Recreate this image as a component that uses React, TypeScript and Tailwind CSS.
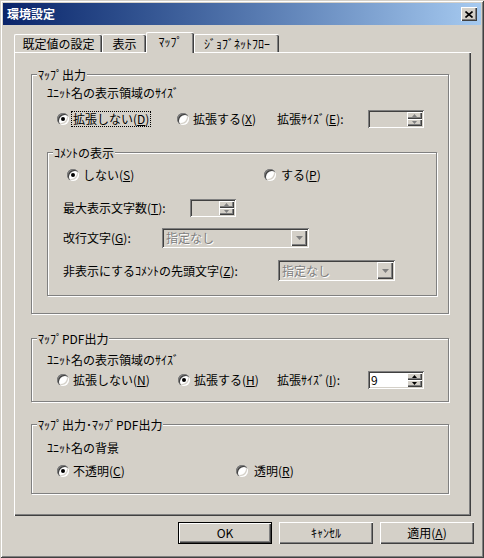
import type { ReactNode } from 'react'

const FONT = "font-['Noto_Sans_CJK_JP','Noto_Sans',sans-serif]"
const SUNKEN =
  'shadow-[inset_1px_1px_0_#808080,inset_-1px_-1px_0_#fff,inset_2px_2px_0_#404040,inset_-2px_-2px_0_#d4d0c8]'
const RAISED =
  'shadow-[inset_1px_1px_0_#fff,inset_-1px_-1px_0_#404040,inset_-2px_-2px_0_#808080]'

function Radio({ checked }: { checked?: boolean }) {
  return (
    <span className="relative inline-block h-[12px] w-[12px] shrink-0 rounded-full bg-white shadow-[inset_1px_1px_0_#808080,inset_2px_2px_0_#404040,inset_-1px_-1px_0_#fff,inset_-2px_-2px_0_#d4d0c8]">
      {checked && <span className="absolute left-[4px] top-[4px] h-[4px] w-[4px] rounded-full bg-black" />}
    </span>
  )
}

function Group({ label, className, children }: { label: string; className: string; children?: ReactNode }) {
  return (
    <div className={`relative flex flex-col border border-[#808080] shadow-[inset_1px_1px_0_#fff,1px_1px_0_#fff] ${className}`}>
      <span className="absolute -top-[7px] left-[5px] bg-[#d4d0c8] px-[1px] leading-[13px]">{label}</span>
      {children}
    </div>
  )
}

function Arrow({ up, enabled }: { up?: boolean; enabled?: boolean }) {
  const c = enabled ? '#000' : '#808080'
  return (
    <svg width="5" height="3" viewBox="0 0 5 3">
      <path d={up ? 'M2.5 0 L5 3 L0 3 Z' : 'M0 0 L5 0 L2.5 3 Z'} fill={c} />
    </svg>
  )
}

function Spin({ className, value, enabled }: { className: string; value?: string; enabled?: boolean }) {
  return (
    <div className={`flex h-[18px] p-[2px] ${enabled ? 'bg-white' : 'bg-[#d4d0c8]'} ${SUNKEN} ${className}`}>
      <div className="flex flex-1 items-center pl-[1px] leading-none">{value}</div>
      <div className="flex w-[15px] flex-col">
        <div className={`flex h-[7px] items-center justify-center bg-[#d4d0c8] ${RAISED}`}>
          <Arrow up enabled={enabled} />
        </div>
        <div className={`flex h-[7px] items-center justify-center bg-[#d4d0c8] ${RAISED}`}>
          <Arrow enabled={enabled} />
        </div>
      </div>
    </div>
  )
}

function Combo({ className }: { className: string }) {
  return (
    <div className={`flex p-[2px] bg-[#d4d0c8] ${SUNKEN} ${className}`}>
      <div className="flex flex-1 items-center pl-[2px] text-[#808080] [text-shadow:1px_1px_0_#fff]">指定なし</div>
      <div className={`flex w-[16px] items-center justify-center bg-[#d4d0c8] ${RAISED}`}>
        <svg width="7" height="4" viewBox="0 0 7 4">
          <path d="M0 0 L7 0 L3.5 4 Z" fill="#808080" />
        </svg>
      </div>
    </div>
  )
}

function Tab({ label, className, selected }: { label: string; className: string; selected?: boolean }) {
  return (
    <div
      className={`flex items-center justify-center rounded-t-[2px] border-l border-t border-white bg-[#d4d0c8] shadow-[inset_-1px_0_0_#404040,inset_-2px_0_0_#808080] ${
        selected ? 'relative z-10 -mb-[1px] h-[21px] pb-[2px]' : 'h-[18px]'
      } ${className}`}
    >
      {label}
    </div>
  )
}

function Button({ children, def }: { children: ReactNode; def?: boolean }) {
  return (
    <div
      className={`flex h-[22px] w-[94px] items-center justify-center bg-[#d4d0c8] ${
        def
          ? 'border border-black shadow-[inset_1px_1px_0_#fff,inset_-1px_-1px_0_#404040,inset_-2px_-2px_0_#808080]'
          : RAISED
      }`}
    >
      {children}
    </div>
  )
}

export default function App() {
  return (
    <div
      className={`flex h-[558px] w-[484px] flex-col bg-[#d4d0c8] p-[3px] text-[12px] leading-none text-black shadow-[inset_1px_1px_0_#d4d0c8,inset_-1px_-1px_0_#404040,inset_2px_2px_0_#fff,inset_-2px_-2px_0_#808080] ${FONT}`}
    >
      {/* title bar */}
      <div className="flex h-[22px] items-center justify-between bg-gradient-to-r from-[#0a246a] to-[#a6caf0] pl-[4px] pr-[4px]">
        <span className="font-bold text-white">環境設定</span>
        <div className={`flex h-[14px] w-[16px] items-center justify-center bg-[#d4d0c8] ${RAISED}`}>
          <svg width="8" height="7" viewBox="0 0 8 7">
            <path d="M0.5 0.5 L7.5 6.5 M7.5 0.5 L0.5 6.5" stroke="#000" strokeWidth="1.6" />
          </svg>
        </div>
      </div>

      {/* tabs */}
      <div className="ml-[11px] mt-[7px] flex h-[20px] items-end">
        <Tab label="既定値の設定" className="w-[88px]" />
        <Tab label="表示" className="w-[44px]" />
        <Tab label="ﾏｯﾌﾟ" className="w-[48px]" selected />
        <Tab label="ｼﾞｮﾌﾞﾈｯﾄﾌﾛｰ" className="w-[85px]" />
      </div>

      {/* panel */}
      <div className="ml-[11px] flex h-[464px] w-[457px] flex-col pl-[17px] shadow-[inset_1px_1px_0_#fff,inset_-1px_-1px_0_#404040,inset_-2px_-2px_0_#808080]">
        <Group label="ﾏｯﾌﾟ出力" className="mt-[22px] h-[240px] w-[418px]">
          <div className="ml-[15px] mt-[11px] flex h-[14px] items-center">ﾕﾆｯﾄ名の表示領域のｻｲｽﾞ</div>
          <div className="mt-[10px] flex h-[18px] items-center pl-[25px]">
            <div className="flex w-[120px] items-center gap-[3px]">
              <Radio checked />
              <span className="px-[1px] py-[1px] outline outline-1 outline-dotted outline-black">
                拡張しない(<u>D</u>)
              </span>
            </div>
            <div className="flex w-[100px] items-center gap-[4px]">
              <Radio />
              <span>
                拡張する(<u>X</u>)
              </span>
            </div>
            <span className="w-[91px]">
              拡張ｻｲｽﾞ(<u>E</u>):
            </span>
            <Spin className="w-[56px]" />
          </div>

          <Group label="ｺﾒﾝﾄの表示" className="ml-[15px] mt-[24px] h-[144px] w-[390px]">
            <div className="mt-[15px] flex h-[14px] items-center pl-[19px]">
              <div className="flex w-[197px] items-center gap-[4px]">
                <Radio checked />
                <span>
                  しない(<u>S</u>)
                </span>
              </div>
              <div className="flex items-center gap-[5px]">
                <Radio />
                <span>
                  する(<u>P</u>)
                </span>
              </div>
            </div>
            <div className="mt-[17px] flex h-[18px] items-center pl-[15px]">
              <span className="w-[127px]">
                最大表示文字数(<u>T</u>):
              </span>
              <Spin className="w-[46px]" />
            </div>
            <div className="mt-[11px] flex h-[20px] items-center pl-[15px]">
              <span className="w-[99px]">
                改行文字(<u>G</u>):
              </span>
              <Combo className="h-[20px] w-[147px]" />
            </div>
            <div className="mt-[12px] flex h-[21px] items-center pl-[15px]">
              <span className="w-[215px]">
                非表示にするｺﾒﾝﾄの先頭文字(<u>Z</u>):
              </span>
              <Combo className="h-[21px] w-[117px]" />
            </div>
          </Group>
        </Group>

        <Group label="ﾏｯﾌﾟPDF出力" className="mt-[24px] h-[64px] w-[418px]">
          <div className="ml-[15px] mt-[14px] flex h-[14px] items-center">ﾕﾆｯﾄ名の表示領域のｻｲｽﾞ</div>
          <div className="mt-[4px] flex h-[18px] items-center pl-[25px]">
            <div className="flex w-[121px] items-center gap-[4px]">
              <Radio />
              <span>
                拡張しない(<u>N</u>)
              </span>
            </div>
            <div className="flex w-[99px] items-center gap-[4px]">
              <Radio checked />
              <span>
                拡張する(<u>H</u>)
              </span>
            </div>
            <span className="w-[91px]">
              拡張ｻｲｽﾞ(<u>I</u>):
            </span>
            <Spin className="w-[56px]" value="9" enabled />
          </div>
        </Group>

        <Group label="ﾏｯﾌﾟ出力･ﾏｯﾌﾟPDF出力" className="mt-[22px] h-[70px] w-[418px]">
          <div className="ml-[15px] mt-[16px] flex h-[14px] items-center">ﾕﾆｯﾄ名の背景</div>
          <div className="mt-[9px] flex h-[14px] items-center pl-[25px]">
            <div className="flex w-[179px] items-center gap-[4px]">
              <Radio checked />
              <span>
                不透明(<u>C</u>)
              </span>
            </div>
            <div className="flex items-center gap-[6px]">
              <Radio />
              <span>
                透明(<u>R</u>)
              </span>
            </div>
          </div>
        </Group>
      </div>

      {/* buttons */}
      <div className="mt-[6px] flex justify-end gap-[7px] pr-[7px]">
        <Button def>OK</Button>
        <Button>ｷｬﾝｾﾙ</Button>
        <Button>
          適用(<u>A</u>)
        </Button>
      </div>
    </div>
  )
}
